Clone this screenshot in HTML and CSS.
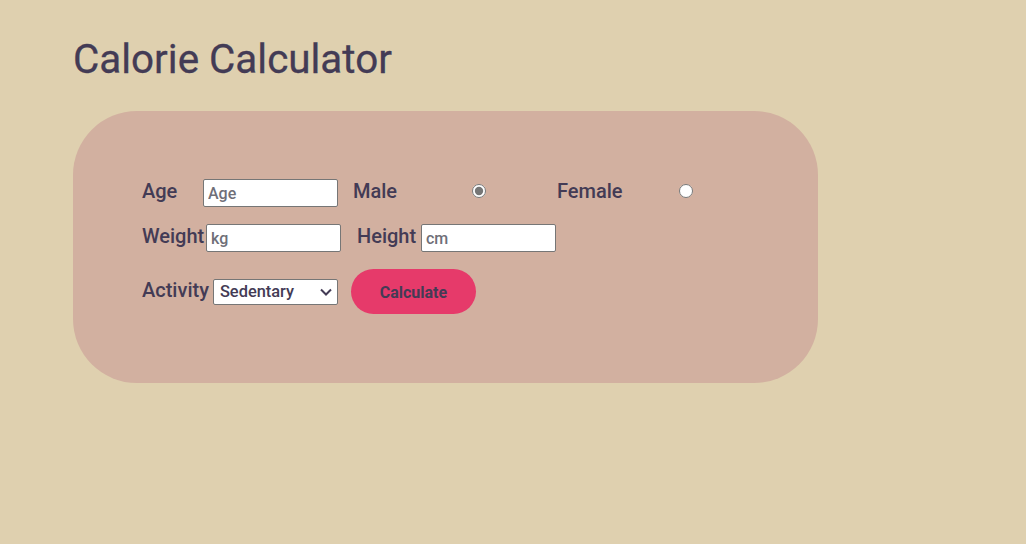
FILE: index.html
```html
<!DOCTYPE html>
<html>
<head>
<meta charset="utf-8">
<link rel="stylesheet" href="styles.css">
</head>
<body>
<main class="page">
  <h1 class="title">Calorie Calculator</h1>
  <section class="card">
    <div class="row row-1">
      <label class="lbl lbl-age">Age</label>
      <input class="field" type="text" placeholder="Age">
      <label class="lbl lbl-male">Male</label>
      <input class="radio radio-male" type="radio" name="sex" checked>
      <label class="lbl lbl-female">Female</label>
      <input class="radio radio-female" type="radio" name="sex">
    </div>
    <div class="row row-2">
      <label class="lbl lbl-weight">Weight</label>
      <input class="field" type="text" placeholder="kg">
      <label class="lbl lbl-height">Height</label>
      <input class="field" type="text" placeholder="cm">
    </div>
    <div class="row row-3">
      <label class="lbl">Activity</label>
      <div class="select-wrap">
        <select class="select">
          <option>Sedentary</option>
          <option>Light</option>
          <option>Moderate</option>
          <option>Active</option>
        </select>
        <svg class="chev" width="12" height="8" viewBox="0 0 12 8"><path d="M1 1.5 L6 6.5 L11 1.5" fill="none" stroke="#433b55" stroke-width="2"/></svg>
      </div>
      <button class="btn">Calculate</button>
    </div>
  </section>
</main>
</body>
</html>
```

FILE: styles.css
```css
html, body {
  margin: 0;
  padding: 0;
  background: #dfd0af;
}
body {
  font-family: Roboto, "Liberation Sans", sans-serif;
  color: #433b55;
}
.page {
  padding: 36px 0 0 73px;
}
.title {
  margin: 0;
  font-size: 40.4px;
  font-weight: 400;
  line-height: 48px;
  color: #433b55;
  -webkit-text-stroke: 0.3px #433b55;
}
.card {
  margin-top: 27px;
  width: 745px;
  height: 272px;
  box-sizing: border-box;
  background: #d2b0a0;
  border-radius: 64px;
  padding: 68px 0 0 69px;
}
.row {
  display: flex;
  align-items: center;
}
.lbl {
  font-size: 20px;
  font-weight: 500;
  line-height: 24px;
  color: #433b55;
  margin-bottom: 4px;
}
.field {
  box-sizing: border-box;
  width: 135px;
  height: 28px;
  margin: 0;
  padding: 1px 4px;
  border: 1px solid #767676;
  border-radius: 2px;
  background: #fff;
  font-family: Roboto, sans-serif;
  font-size: 16px;
  font-weight: 500;
  color: #433b55;
}
.field::placeholder {
  color: #6f6f78;
}
.lbl-age { width: 61px; }
.lbl-male { margin-left: 15px; width: 119px; }
.lbl-weight { width: 64px; }
.radio {
  margin: 0 0 4px 0;
  width: 14px;
  height: 14px;
  accent-color: #767676;
}
.lbl-female { margin-left: 71px; width: 122px; }
.row-1 { height: 28px; }
.row-2 { margin-top: 17px; height: 28px; }
.lbl-height { margin-left: 16px; width: 64px; }
.row-3 { margin-top: 17px; height: 45px; }
.select-wrap {
  position: relative;
  margin-left: 4px;
  width: 125px;
  height: 26px;
}
.select {
  -webkit-appearance: none;
  appearance: none;
  box-sizing: border-box;
  width: 125px;
  height: 26px;
  margin: 0;
  border: 1px solid #767676;
  border-radius: 2px;
  background: #fff;
  font-family: Roboto, sans-serif;
  font-size: 16.4px;
  font-weight: 500;
  color: #433b55;
  padding: 0 0 0 6px;
}
.chev {
  position: absolute;
  right: 6px;
  top: 9px;
  pointer-events: none;
}
.btn {
  margin-left: 13px;
  width: 125px;
  height: 45px;
  border: none;
  border-radius: 23px;
  background: #e63a6a;
  font-family: Roboto, sans-serif;
  font-size: 16px;
  font-weight: 700;
  color: #433b55;
  padding: 2px 0 0;
}
```
